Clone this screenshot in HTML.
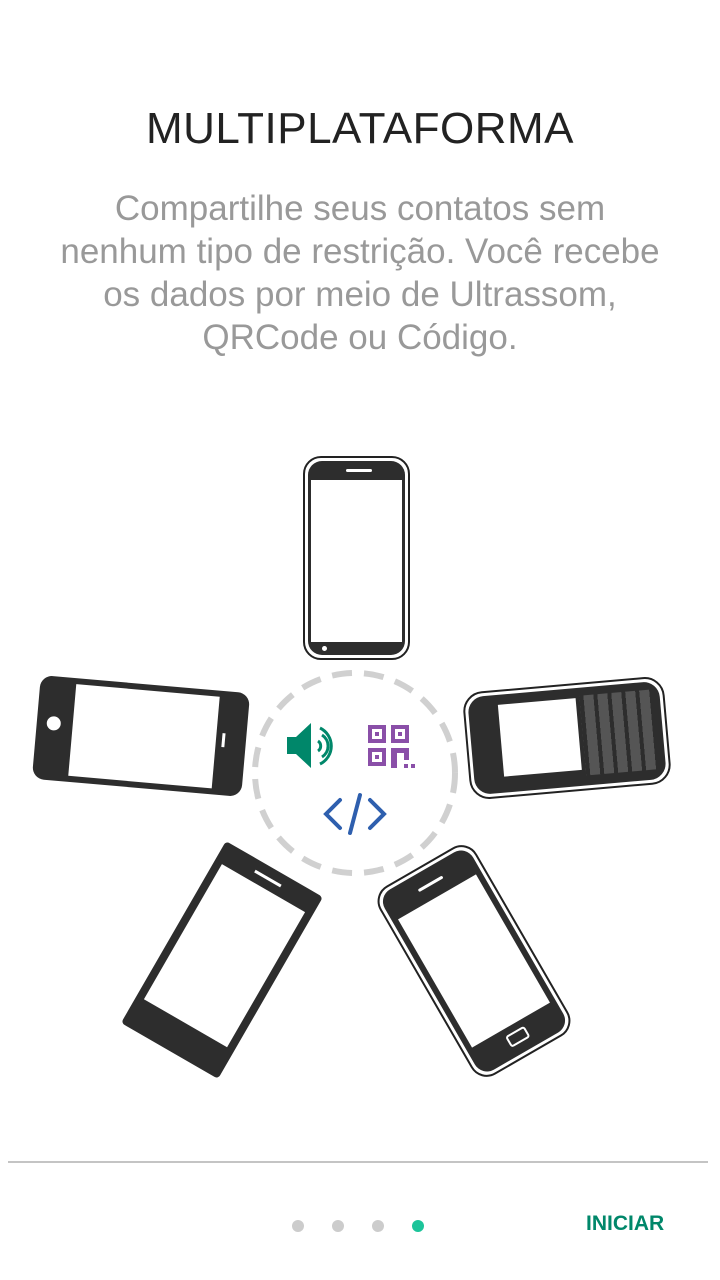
<!DOCTYPE html>
<html><head><meta charset="utf-8"><style>
html,body{margin:0;padding:0;background:#fff;width:720px;height:1280px;overflow:hidden;font-family:"Liberation Sans",sans-serif}
.t{position:absolute;left:0;width:720px;text-align:center;top:104px;font-size:44px;color:#222;letter-spacing:0.5px}
.p{position:absolute;left:0;width:720px;text-align:center;top:187px;font-size:35px;line-height:43px;color:#999}
.ph{position:absolute;box-sizing:border-box}
.line{position:absolute;left:8px;width:700px;top:1161px;height:2px;background:#c4c4c4}
.dot{position:absolute;top:1220px;width:12px;height:12px;border-radius:50%;background:#ccc}
.ini{position:absolute;left:586px;top:1212px;font-size:21px;font-weight:bold;color:#00876a}
</style></head><body>
<div class="t">MULTIPLATAFORMA</div>
<div class="p">Compartilhe seus contatos sem<br>nenhum tipo de restrição. Você recebe<br>os dados por meio de Ultrassom,<br>QRCode ou Código.</div>

<div class="ph" style="left:303px;top:456px;width:107px;height:204px;border:2px solid #222;border-radius:18px;background:#fff;padding:3px">
 <div style="width:100%;height:100%;background:#2d2d2d;border-radius:14px;position:relative">
  <div style="position:absolute;left:3px;top:19px;right:3px;height:162px;background:#fff"></div>
  <div style="position:absolute;left:38px;top:8px;width:26px;height:3px;background:#fff;border-radius:2px"></div>
  <div style="position:absolute;left:14px;top:185px;width:5px;height:5px;border-radius:50%;background:#fff"></div>
 </div></div>

<div class="ph" style="left:36px;top:684px;width:210px;height:104px;background:#2d2d2d;border-radius:12px;transform:rotate(5deg)">
 <div style="position:absolute;left:36px;top:6px;width:144px;height:92px;background:#fff"></div>
 <div style="position:absolute;left:10px;top:40px;width:14px;height:14px;border-radius:50%;background:#fff"></div>
 <div style="position:absolute;left:186px;top:42px;width:3px;height:14px;background:#fff"></div>
</div>

<div class="ph" style="left:466px;top:684px;width:202px;height:108px;border:2px solid #222;border-radius:20px;background:#fff;padding:3px;transform:rotate(-5deg)">
 <div style="width:100%;height:100%;background:#2d2d2d;border-radius:16px;position:relative">
  <div style="position:absolute;left:30px;top:10px;width:78px;height:72px;background:#fff"></div>
  <div style="position:absolute;left:112px;top:8px;width:72px;height:80px;background:repeating-linear-gradient(90deg,#2d2d2d 0 4px,#555 4px 14px)"></div>
 </div></div>

<div class="ph" style="left:166px;top:855px;width:112px;height:210px;background:#2d2d2d;border-radius:4px;transform:rotate(30deg)">
 <div style="position:absolute;left:8px;top:22px;width:96px;height:156px;background:#fff"></div>
 <div style="position:absolute;left:40px;top:10px;width:30px;height:3px;background:#fff"></div>
</div>

<div class="ph" style="left:418px;top:852px;width:112px;height:218px;border:2px solid #222;border-radius:18px;background:#fff;padding:3px;transform:rotate(-30deg)">
 <div style="width:100%;height:100%;background:#2d2d2d;border-radius:14px;position:relative">
  <div style="position:absolute;left:6px;top:30px;right:6px;height:148px;background:#fff"></div>
  <div style="position:absolute;left:38px;top:14px;width:28px;height:3px;background:#fff;border-radius:2px"></div>
  <div style="position:absolute;left:40px;top:185px;width:22px;height:13px;border:2px solid #fff;border-radius:3px;box-sizing:border-box"></div>
 </div></div>

<svg style="position:absolute;left:0;top:0" width="720" height="1280">
 <circle cx="355" cy="773" r="100" fill="none" stroke="#d0d0d0" stroke-width="6" stroke-dasharray="20 12"/>
 <path d="M287 737 h9 l15 -14 v45 l-15 -14 h-9z" fill="#00876a"/>
 <path d="M318 741 a6 6 0 0 1 0 10" fill="none" stroke="#00876a" stroke-width="3"/>
 <path d="M322 735 a13 13 0 0 1 0 22" fill="none" stroke="#00876a" stroke-width="3"/>
 <path d="M320 728 a20 20 0 0 1 0 36" fill="none" stroke="#00876a" stroke-width="3"/>
 <g fill="none" stroke="#8a4fa8" stroke-width="4">
  <rect x="370" y="727" width="14" height="14"/><rect x="393" y="727" width="14" height="14"/><rect x="370" y="750" width="14" height="14"/>
 </g>
 <g fill="#8a4fa8"><rect x="375" y="732" width="4" height="4"/><rect x="398" y="732" width="4" height="4"/><rect x="375" y="755" width="4" height="4"/>
 <rect x="391" y="748" width="6" height="20"/><rect x="397" y="748" width="12" height="5"/><rect x="404" y="748" width="5" height="12"/><rect x="404" y="764" width="4" height="4"/><rect x="411" y="764" width="4" height="4"/></g>
 <g fill="none" stroke="#2e5fae" stroke-width="4" stroke-linecap="round">
  <path d="M340 800 l-14 14 l14 14"/><path d="M370 800 l14 14 l-14 14"/><path d="M360 795 l-10 38"/>
 </g>
</svg>

<div class="line"></div>
<div class="dot" style="left:292px"></div>
<div class="dot" style="left:332px"></div>
<div class="dot" style="left:372px"></div>
<div class="dot" style="left:412px;background:#1cc49a"></div>
<div class="ini">INICIAR</div>
</body></html>
